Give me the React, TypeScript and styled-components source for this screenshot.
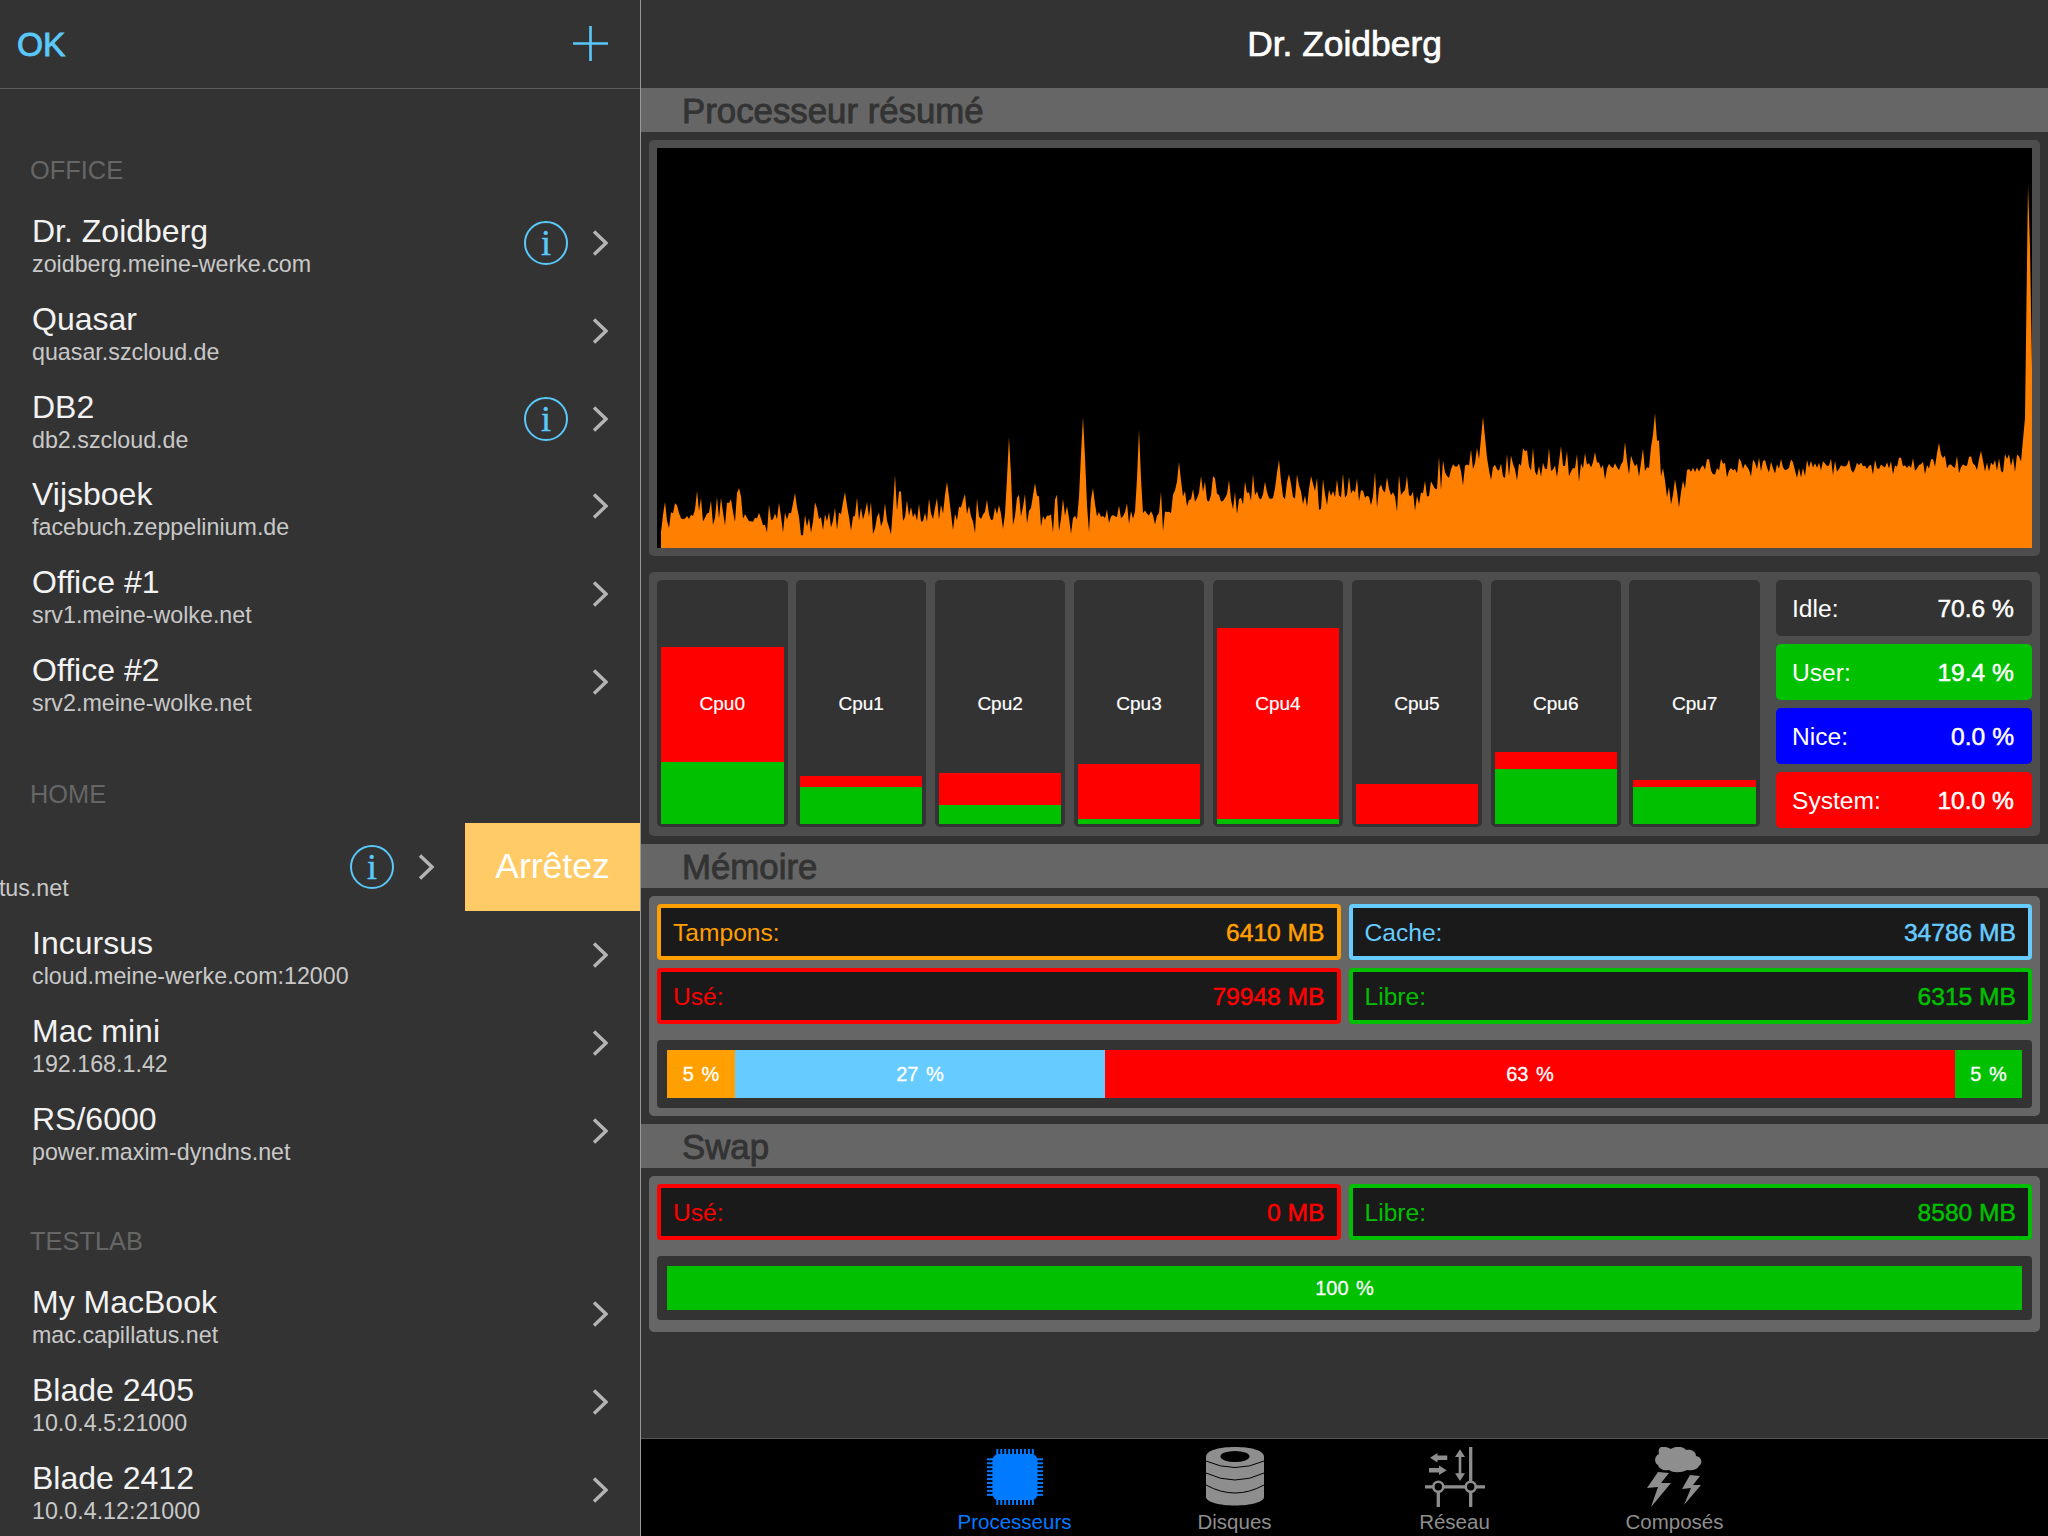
import React from "react";
import styled, { createGlobalStyle } from "styled-components";

const GlobalStyle = createGlobalStyle`
  html, body {
    margin: 0;
    padding: 0;
    background: #333;
  }
  body {
    font-family: "Liberation Sans", Arial, sans-serif;
    overflow: hidden;
  }
`;

const Screen = styled.div`
  display: flex;
  width: 2048px;
  height: 1536px;
  overflow: hidden;
  background: #333;
`;

/* ---------- sidebar ---------- */

const Sidebar = styled.aside`
  flex: 0 0 640px;
  height: 1536px;
  overflow: hidden;
  border-right: 1px solid #999;
`;

const SidebarHeader = styled.header`
  display: flex;
  align-items: center;
  justify-content: space-between;
  box-sizing: border-box;
  height: 89px;
  padding: 0 32px 2px 17px;
  border-bottom: 1px solid #5c5c5c;
`;

const OkButton = styled.span`
  padding-top: 3px;
  color: #5ac8fa;
  font-size: 33.5px;
  -webkit-text-stroke: 0.9px #5ac8fa;
`;

const SectionLabel = styled.div<{ $height: number }>`
  display: flex;
  align-items: flex-end;
  box-sizing: border-box;
  height: ${(p) => p.$height}px;
  padding: 0 0 14px 30px;
  color: #666;
  font-size: 25.4px;
  line-height: 30px;
`;

const Row = styled.div`
  display: flex;
  width: 640px;
  height: 87.85px;
  overflow: hidden;
`;

const RowContent = styled.div<{ $swiped?: boolean }>`
  display: flex;
  flex: 0 0 640px;
  align-items: center;
  box-sizing: border-box;
  margin-left: ${(p) => (p.$swiped ? "-174px" : "0")};
  padding: 0 32px 0 32px;
`;

const RowText = styled.div`
  flex: 1;
  min-width: 0;
  padding-top: 5px;
`;

const RowName = styled.div`
  color: #f2f2f2;
  font-size: 32px;
  line-height: 37px;
  white-space: nowrap;
`;

const RowHost = styled.div`
  margin-top: 1px;
  color: #c8c8c8;
  font-size: 23.25px;
  line-height: 27px;
  white-space: nowrap;
`;

const InfoBadge = styled.span`
  display: flex;
  align-items: center;
  justify-content: center;
  box-sizing: border-box;
  width: 44px;
  height: 44px;
  margin-right: 24px;
  border: 2px solid #5ac8fa;
  border-radius: 50%;
  color: #5ac8fa;
  font-family: "Liberation Serif", serif;
  font-size: 36px;
  line-height: 40px;
  -webkit-text-stroke: 0.4px #5ac8fa;
`;

const StopButton = styled.div`
  display: flex;
  flex: 0 0 175px;
  align-items: center;
  justify-content: center;
  margin-left: -1px;
  background: #fecb66;
  color: #fff;
  font-size: 35.5px;
`;

const Chevron = () => (
  <svg width="16" height="26" viewBox="0 0 16 26">
    <path d="M2 1.5 L14 13 L2 24.5" fill="none" stroke="#b4b4b4" strokeWidth="3.4" />
  </svg>
);

const Plus = () => (
  <svg width="35" height="35" viewBox="0 0 35 35">
    <path d="M17.5 0 V35 M0 17.5 H35" stroke="#5ac8fa" strokeWidth="2.6" fill="none" />
  </svg>
);

type Host = { name: string; host: string; info?: boolean; swiped?: boolean };

const groups: { label: string; height: number; hosts: Host[] }[] = [
  {
    label: "OFFICE",
    height: 110,
    hosts: [
      { name: "Dr. Zoidberg", host: "zoidberg.meine-werke.com", info: true },
      { name: "Quasar", host: "quasar.szcloud.de" },
      { name: "DB2", host: "db2.szcloud.de", info: true },
      { name: "Vijsboek", host: "facebuch.zeppelinium.de" },
      { name: "Office #1", host: "srv1.meine-wolke.net" },
      { name: "Office #2", host: "srv2.meine-wolke.net" },
    ],
  },
  {
    label: "HOME",
    height: 97,
    hosts: [
      { name: "Nibbler", host: "nibbler.capillatus.net", info: true, swiped: true },
      { name: "Incursus", host: "cloud.meine-werke.com:12000" },
      { name: "Mac mini", host: "192.168.1.42" },
      { name: "RS/6000", host: "power.maxim-dyndns.net" },
    ],
  },
  {
    label: "TESTLAB",
    height: 96,
    hosts: [
      { name: "My MacBook", host: "mac.capillatus.net" },
      { name: "Blade 2405", host: "10.0.4.5:21000" },
      { name: "Blade 2412", host: "10.0.4.12:21000" },
    ],
  },
];

/* ---------- detail pane ---------- */

const Main = styled.main`
  display: flex;
  flex: 1;
  flex-direction: column;
  min-width: 0;
  height: 1536px;
`;

const Title = styled.h1`
  flex: 0 0 88px;
  margin: 0;
  color: #fff;
  font-size: 35.4px;
  font-weight: 400;
  line-height: 88px;
  text-align: center;
  -webkit-text-stroke: 0.7px #fff;
`;

const Content = styled.div`
  display: flex;
  flex: 1;
  flex-direction: column;
  min-height: 0;
`;

const SectionBar = styled.h2`
  flex: 0 0 44px;
  height: 44px;
  margin: 0;
  padding-left: 41px;
  background: #666;
  color: #333;
  font-size: 34.8px;
  font-weight: 400;
  line-height: 46px;
  -webkit-text-stroke: 0.9px #333;
`;

const Panel = styled.section<{ $tone: string; $extraBottom?: number }>`
  margin: 8px;
  padding: 8px 8px ${(p) => 8 + (p.$extraBottom ?? 0)}px;
  border-radius: 5px;
  background: ${(p) => p.$tone};
`;

const ChartBox = styled.div`
  height: 400px;
  background: #000;
`;

const CpuPanel = styled.div`
  display: grid;
  grid-template-columns: 1fr 256px;
  gap: 16px;
`;

const CpuGrid = styled.div`
  display: grid;
  grid-template-columns: repeat(8, 1fr);
  gap: 8.4px;
`;

const CpuCell = styled.div`
  position: relative;
  display: flex;
  flex-direction: column;
  justify-content: flex-end;
  box-sizing: border-box;
  height: 247px;
  padding: 0 4px 3px;
  border-radius: 5px;
  background: #333;
`;

const CpuLabel = styled.span`
  position: absolute;
  top: 112px;
  right: 0;
  left: 0;
  color: #fff;
  font-size: 19px;
  line-height: 24px;
  text-align: center;
  -webkit-text-stroke: 0.2px #fff;
`;

const CpuBar = styled.div<{ $color: string }>`
  flex: none;
  background: ${(p) => p.$color};
`;

const StatList = styled.div`
  display: grid;
  grid-auto-rows: 56px;
  gap: 8px;
`;

const Stat = styled.div<{ $bg: string }>`
  display: flex;
  align-items: center;
  justify-content: space-between;
  padding: 2px 18px 0 16px;
  border-radius: 5px;
  background: ${(p) => p.$bg};
  color: #fff;
  font-size: 24.6px;
`;

const StatValue = styled.span`
  -webkit-text-stroke: 0.5px currentColor;
`;

const ValueGrid = styled.div`
  display: grid;
  grid-template-columns: 1fr 1fr;
  grid-auto-rows: 56px;
  gap: 8px;
`;

const ValueBox = styled.div<{ $color: string }>`
  display: flex;
  align-items: center;
  justify-content: space-between;
  box-sizing: border-box;
  padding: 2px 12px 0;
  border: 4px solid ${(p) => p.$color};
  border-radius: 4px;
  background: #1a1a1a;
  color: ${(p) => p.$color};
  font-size: 24.6px;
`;

const Track = styled.div<{ $height: number }>`
  display: flex;
  box-sizing: border-box;
  height: ${(p) => p.$height}px;
  margin-top: 16px;
  padding: 10px;
  border-radius: 4px;
  background: #333;
`;

const Segment = styled.div<{ $color: string; $grow: number }>`
  display: flex;
  flex: ${(p) => p.$grow} 0 0;
  align-items: center;
  justify-content: center;
  background: ${(p) => p.$color};
  color: #fff;
  font-size: 20px;
  -webkit-text-stroke: 0.3px #fff;
  word-spacing: 2px;
`;

/* ---------- tab bar ---------- */

const TabBar = styled.nav`
  display: flex;
  flex: 0 0 98px;
  justify-content: center;
  box-sizing: border-box;
  border-top: 1px solid #555;
  background: #000;
`;

const Tab = styled.div<{ $active?: boolean }>`
  display: flex;
  flex: 0 0 220px;
  flex-direction: column;
  align-items: center;
  color: ${(p) => (p.$active ? "#007aff" : "#8e8e8e")};
  font-size: 20.5px;
`;

const TabIcon = styled.div`
  display: flex;
  align-items: center;
  justify-content: center;
  height: 61px;
  margin-top: 7px;
`;

const TabLabel = styled.span`
  margin-top: 3px;
  line-height: 24px;
`;

const CpuIcon = () => {
  const pins = Array.from({ length: 10 }, (_, i) => 10.3 + i * 3.95);
  return (
    <svg width="56" height="56" viewBox="0 0 56 56">
      <rect x="5.5" y="5" width="45" height="46" rx="6" fill="#007aff" />
      {pins.map((p) => (
        <g key={p} fill="#007aff">
          <rect x={p - 1} y="0" width="2" height="6" />
          <rect x={p - 1} y="50" width="2" height="6" />
          <rect x="0" y={p - 1} width="6" height="2" />
          <rect x="50" y={p - 1} width="6" height="2" />
        </g>
      ))}
    </svg>
  );
};

const DiskIcon = () => (
  <svg width="58" height="59" viewBox="0 0 58 59">
    <path d="M0 10 C0 3 14 0 29 0 C44 0 58 3 58 10 V50 C58 55 44 58.5 29 58.5 C14 58.5 0 55 0 50 Z" fill="#8e8e8e" />
    <ellipse cx="29" cy="9.5" rx="14.5" ry="5.5" fill="#000" />
    <path d="M0 14 Q29 27 58 14 M0 26 Q29 40 58 26 M0 38 Q29 54 58 38" fill="none" stroke="#000" strokeWidth="1" />
  </svg>
);

const NetworkIcon = () => (
  <svg width="60" height="60" viewBox="0 0 60 60" fill="none" stroke="#8e8e8e">
    <path d="M45.7 0 V60 M13.3 40 V60 M0 39.8 H60" strokeWidth="3.3" />
    <circle cx="13.3" cy="39.8" r="5" fill="#000" strokeWidth="2.6" />
    <circle cx="45.7" cy="39.8" r="5" fill="#000" strokeWidth="2.6" />
    <path d="M35 6 V30" strokeWidth="2.6" />
    <path d="M35 2.3 L40 10 H30 Z M35 34 L40 26.3 H30 Z" fill="#8e8e8e" stroke="none" />
    <path d="M5 10.7 L12.5 6 V8.5 H22.3 V13 H12.5 V15.5 Z M21.7 23.3 L14 18.5 V21 H4 V25.6 H14 V28 Z" fill="#8e8e8e" stroke="none" />
  </svg>
);

const StormIcon = () => (
  <svg width="56" height="60" viewBox="0 0 56 60" fill="#8e8e8e">
    <path d="M14 0 C18 -1 22 1 24 2 C28 -1 36 -1 39 3 C45 2 49 5 49 9 C55 10 56 16 52 19 C50 23 44 24 40 23 C34 26 26 26 22 23 C17 24 12 22 11 18 C7 16 7 9 12 7 C11 4 12 1 14 0 Z" />
    <path d="M11 25 L0 41 L11 40 L4 60 L24 36 L14 36 L22 26 Z" />
    <path d="M43 28 L35 42 L44 41 L37 58 L54 38 L46 38 L53 29 Z" />
  </svg>
);

/* ---------- load graph data ---------- */

const W = 1371;
const H = 400;

// baseline level of the graph, [x, height]
const levels: [number, number][] = [
  [0, 31], [300, 31], [519, 35], [530, 50], [620, 53], [680, 55], [770, 55],
  [783, 80], [990, 82], [1003, 80], [1006, 52], [1018, 52], [1024, 78], [1280, 82], [1361, 84],
];

// tall single peaks, [x, height, half width]
const peaks: [number, number, number][] = [
  [36, 57, 3], [78, 60, 3], [134, 55, 4], [184, 56, 3], [234, 73, 2.5], [239, 73, 2.5], [286, 66, 5],
  [303, 60, 3], [348, 111, 4], [374, 65, 6], [422, 131, 5], [432, 60, 3], [478, 118, 3.5], [518, 86, 5],
  [540, 72, 3], [618, 88, 5], [628, 74, 4], [650, 72, 4], [822, 131, 5], [865, 101, 5], [964, 106, 3],
  [994, 135, 5], [1079, 95, 2], [1278, 105, 3], [1320, 97, 3],
];

const buildGraph = () => {
  let seed = 4711;
  const rnd = () => {
    seed = (seed * 16807) % 2147483647;
    return seed / 2147483647;
  };
  const levelAt = (x: number) => {
    for (let i = 1; i < levels.length; i++) {
      if (x <= levels[i][0]) {
        const [x0, y0] = levels[i - 1];
        const [x1, y1] = levels[i];
        return y0 + ((y1 - y0) * (x - x0)) / (x1 - x0);
      }
    }
    return levels[levels.length - 1][1];
  };
  const pts: string[] = [`0,${H}`];
  for (let x = 0; x <= 1361; x += 2) {
    let h = levelAt(x);
    // the right part of the graph is much calmer
    const amp = x > 1024 ? 0.5 : 1;
    const r = rnd();
    if (r < 0.18) h -= (7 + rnd() * 12) * amp;
    else if (r > 0.78) h += (8 + rnd() * 14) * amp;
    else h += (rnd() - 0.5) * 10 * amp;
    for (const [px, ph, hw] of peaks) {
      const d = Math.abs(x - px);
      if (d < hw) h = Math.max(h, ph - ((ph - h) * d) / hw);
    }
    pts.push(`${x},${H - h}`);
  }
  pts.push(`1364,${H - 130}`, `1367,${H - 363}`, `1369,${H - 300}`, `1371,${H - 180}`, `1371,${H}`);
  return pts.join(" ");
};

const graphPoints = buildGraph();

const cpus = [
  { name: "Cpu0", user: 62, system: 115 },
  { name: "Cpu1", user: 37, system: 11 },
  { name: "Cpu2", user: 19, system: 32 },
  { name: "Cpu3", user: 5, system: 55 },
  { name: "Cpu4", user: 5, system: 191 },
  { name: "Cpu5", user: 0, system: 40 },
  { name: "Cpu6", user: 55, system: 17 },
  { name: "Cpu7", user: 37, system: 7 },
];

const stats = [
  { label: "Idle:", value: "70.6 %", bg: "#333" },
  { label: "User:", value: "19.4 %", bg: "#00c000" },
  { label: "Nice:", value: "0.0 %", bg: "#0000ff" },
  { label: "System:", value: "10.0 %", bg: "#ff0000" },
];

const ORANGE = "#ff9f00";
const BLUE = "#66ccff";
const RED = "#ff0000";
const GREEN = "#00c000";

const tabs = [
  { label: "Processeurs", icon: <CpuIcon />, active: true },
  { label: "Disques", icon: <DiskIcon /> },
  { label: "Réseau", icon: <NetworkIcon /> },
  { label: "Composés", icon: <StormIcon /> },
];

const App = () => {
  return (
    <Screen>
      <GlobalStyle />
      <Sidebar>
        <SidebarHeader>
          <OkButton>OK</OkButton>
          <Plus />
        </SidebarHeader>
        {groups.map((group) => (
          <div key={group.label}>
            <SectionLabel $height={group.height}>{group.label}</SectionLabel>
            {group.hosts.map((h) => (
              <Row key={h.name}>
                <RowContent $swiped={h.swiped}>
                  <RowText>
                    <RowName>{h.name}</RowName>
                    <RowHost>{h.host}</RowHost>
                  </RowText>
                  {h.info && <InfoBadge>i</InfoBadge>}
                  <Chevron />
                </RowContent>
                {h.swiped && <StopButton>Arrêtez</StopButton>}
              </Row>
            ))}
          </div>
        ))}
      </Sidebar>
      <Main>
        <Title>Dr. Zoidberg</Title>
        <Content>
          <SectionBar>Processeur résumé</SectionBar>
          <Panel $tone="#4d4d4d">
            <ChartBox>
              <svg width="100%" height="400" viewBox={`-4 0 ${W + 4} ${H}`} preserveAspectRatio="none">
                <polygon points={graphPoints} fill="#ff8000" />
              </svg>
            </ChartBox>
          </Panel>
          <Panel $tone="#4d4d4d">
            <CpuPanel>
              <CpuGrid>
                {cpus.map((c) => (
                  <CpuCell key={c.name}>
                    <CpuBar $color={RED} style={{ height: c.system }} />
                    <CpuBar $color={GREEN} style={{ height: c.user }} />
                    <CpuLabel>{c.name}</CpuLabel>
                  </CpuCell>
                ))}
              </CpuGrid>
              <StatList>
                {stats.map((s) => (
                  <Stat key={s.label} $bg={s.bg}>
                    <span>{s.label}</span>
                    <StatValue>{s.value}</StatValue>
                  </Stat>
                ))}
              </StatList>
            </CpuPanel>
          </Panel>
          <SectionBar>Mémoire</SectionBar>
          <Panel $tone="#666">
            <ValueGrid>
              <ValueBox $color={ORANGE}><span>Tampons:</span><StatValue>6410 MB</StatValue></ValueBox>
              <ValueBox $color={BLUE}><span>Cache:</span><StatValue>34786 MB</StatValue></ValueBox>
              <ValueBox $color={RED}><span>Usé:</span><StatValue>79948 MB</StatValue></ValueBox>
              <ValueBox $color={GREEN}><span>Libre:</span><StatValue>6315 MB</StatValue></ValueBox>
            </ValueGrid>
            <Track $height={68}>
              <Segment $color={ORANGE} $grow={68}>5 %</Segment>
              <Segment $color={BLUE} $grow={370}>27 %</Segment>
              <Segment $color={RED} $grow={850}>63 %</Segment>
              <Segment $color={GREEN} $grow={67}>5 %</Segment>
            </Track>
          </Panel>
          <SectionBar>Swap</SectionBar>
          <Panel $tone="#666" $extraBottom={4}>
            <ValueGrid>
              <ValueBox $color={RED}><span>Usé:</span><StatValue>0 MB</StatValue></ValueBox>
              <ValueBox $color={GREEN}><span>Libre:</span><StatValue>8580 MB</StatValue></ValueBox>
            </ValueGrid>
            <Track $height={64}>
              <Segment $color={GREEN} $grow={1}>100 %</Segment>
            </Track>
          </Panel>
        </Content>
        <TabBar>
          {tabs.map((t) => (
            <Tab key={t.label} $active={t.active}>
              <TabIcon>{t.icon}</TabIcon>
              <TabLabel>{t.label}</TabLabel>
            </Tab>
          ))}
        </TabBar>
      </Main>
    </Screen>
  );
};

export default App;
